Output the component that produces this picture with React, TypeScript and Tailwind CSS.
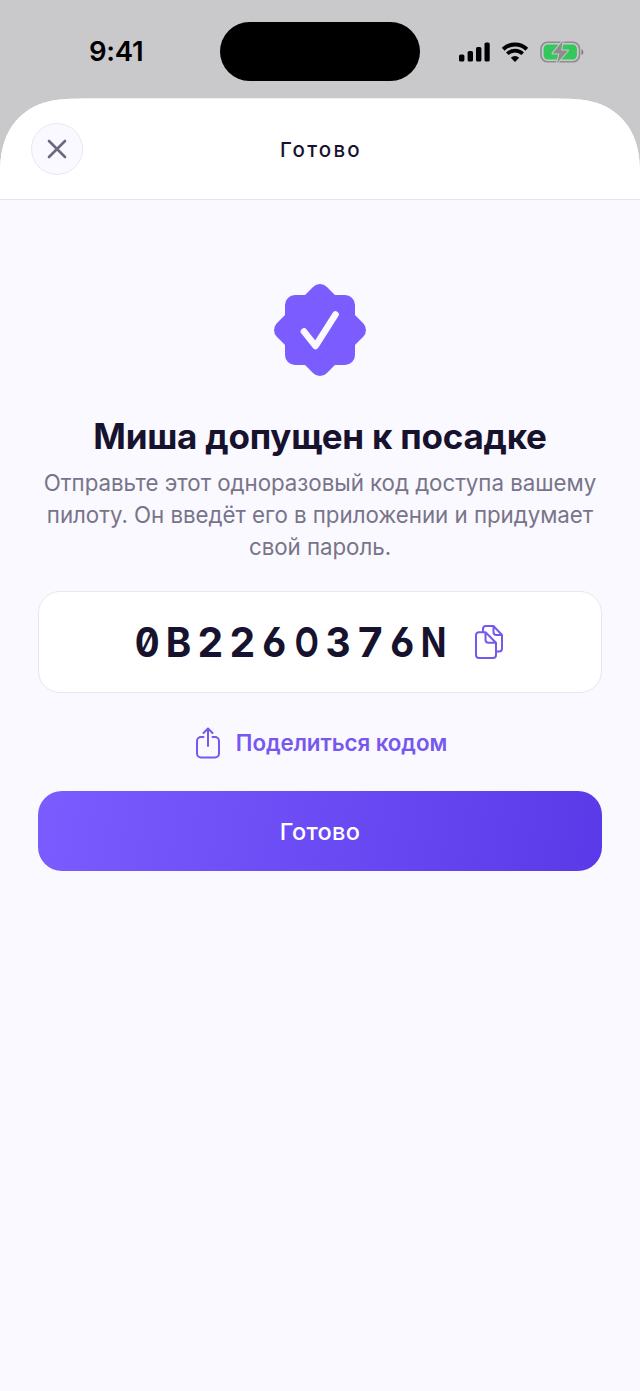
const code: [string, string][] = [
  ['0', 'scale-x-[0.94]'],
  ['B', 'scale-x-[0.94]'],
  ['2', 'scale-x-[0.99]'],
  ['2', 'scale-x-[0.99]'],
  ['6', 'scale-x-[0.96]'],
  ['O', 'scale-x-[0.76]'],
  ['3', 'scale-x-[0.95]'],
  ['7', 'scale-x-[1.04]'],
  ['6', 'scale-x-[0.96]'],
  ['N', 'scale-x-[0.82]'],
];

function StatusBar() {
  return (
    <div className="flex h-[98px] items-start pt-[22px]">
      <div className="flex h-[58px] w-[220px] items-center pl-[89px] pt-[2px] text-[27.500px] font-semibold tracking-[-0.300px] text-black">
        <span>9:41</span>
      </div>
      <div className="h-[58.500px] w-[200px] rounded-full bg-black" />
      <div className="flex h-[58px] items-center pl-[38px] pt-px">
        <svg width="32" height="22" viewBox="0 0 32 22">
          <rect x="1" y="13.5" width="5.4" height="7" rx="1.6" />
          <rect x="9.6" y="10" width="5.4" height="10.5" rx="1.6" />
          <rect x="18" y="6" width="5.4" height="14.5" rx="1.6" />
          <rect x="26.5" y="1.5" width="5.2" height="19" rx="1.6" />
        </svg>
        <svg className="ml-[11px]" width="28" height="22" viewBox="0 0 28 22">
          <path d="M2.2 8.2a17 17 0 0 1 23.6 0" fill="none" stroke="#000" strokeWidth="4" />
          <path d="M6.3 12.800a11 11 0 0 1 15.4 0" fill="none" stroke="#000" strokeWidth="3.6" />
          <path d="M9.8 16.8a6 6 0 0 1 8.4 0L14 21Z" />
        </svg>
        <svg className="ml-[11px]" width="45" height="24" viewBox="0 0 45 24">
          <rect x="1" y="2.2" width="38.5" height="19.6" rx="6.6" fill="none" stroke="#8d8d8f" strokeWidth="1.6" />
          <rect x="3.6" y="4.6" width="33.3" height="14.8" rx="4.2" fill="#34c759" />
          <path d="M41.5 9.2c2.4.8 2.4 5 0 5.800Z" fill="#77777a" />
          <path d="M22.8.8 12.600 13.400h6.800L17 23.200 28 10.400h-6.900Z" fill="#8d8d8f" stroke="#c9c9cb" strokeWidth="2" paintOrder="stroke" strokeLinejoin="round" />
        </svg>
      </div>
    </div>
  );
}

export default function App() {
  return (
    <div className="flex h-[1391px] w-[640px] flex-col bg-[#c9c9cb] font-['Inter',sans-serif]">
      <StatusBar />
      <main className="flex flex-1 flex-col bg-[#faf9ff] [clip-path:path('M0_1293V77C0_56_3_42_12_28C20_17_30_9_43_5C55_1_70_0.500_92_0.500H548C570_0.500_585_1_597_5C610_9_620_17_628_28C637_42_640_56_640_77V1293Z')]">
        <header className="grid h-[102px] grid-cols-[52px_1fr_52px] items-center border-b border-[#e6e4f0] bg-white px-[31px] pt-px">
          <button className="flex size-[52px] items-center justify-center rounded-full border-[1.5px] border-[#e8e6f2] bg-[#faf9ff]">
            <svg width="20" height="20" viewBox="0 0 20 20" fill="none" stroke="#6b6880" strokeWidth="2.6" strokeLinecap="round">
              <path d="m2 2 16 16M18 2 2 18" />
            </svg>
          </button>
          <h1 className="pt-[2px] pl-[2px] text-center text-[20.500px] font-medium tracking-[2.200px] text-[#17132e]">Готово</h1>
        </header>
        <section className="flex flex-col items-center px-[38px] pt-[84px]">
          <svg width="92" height="92" viewBox="0 0 92 92">
            <g fill="#7b5cff">
              <rect x="11" y="11" width="70" height="70" rx="10" />
              <rect x="10.700" y="10.700" width="70.600" height="70.600" rx="9.500" transform="rotate(45 46 46)" />
            </g>
            <path d="m30 48.500 11.500 14.500L61.500 31.500" transform="translate(0 -1)" fill="none" stroke="#faf9ff" strokeWidth="6.600" strokeLinecap="round" strokeLinejoin="round" />
          </svg>
          <h2 className="mt-[38px] whitespace-nowrap text-[35px] leading-[44px] font-bold tracking-[-0.220px] text-[#17132e]">Миша допущен к посадке</h2>
          <p className="mt-[9px] text-center text-[22.300px] leading-[32px] tracking-[-0.030px] whitespace-nowrap text-[#787489]">
            Отправьте этот одноразовый код доступа вашему
            <br />
            пилоту. Он введёт его в приложении и придумает
            <br />
            свой пароль.
          </p>
          <div className="mt-[28px] flex h-[102px] w-full items-center rounded-[22px] border-[1.5px] border-[#e8e6f2] bg-white pl-[92px]">
            <div className="flex text-[41px] leading-[50px] font-bold text-[#17132e] [font-feature-settings:'zero','cv03','tnum']">
              {code.map(([char, scale], index) => (
                <span key={index} className="flex w-[31.900px] justify-center">
                  <span className={scale}>{char}</span>
                </span>
              ))}
            </div>
            <svg className="ml-[25.500px]" width="30" height="36" viewBox="0 0 30 36" fill="none" stroke="#7758ef" strokeWidth="2" strokeLinejoin="round">
              <path d="M8 8V5a3 3 0 0 1 3-3h7.500l8.500 9v13.500a3 3 0 0 1-3 3H21M18.500 2v6a3 3 0 0 0 3 3h5.500" />
              <path d="M4 8.200h6.500L21 18.700V31a3 3 0 0 1-3 3H4a3 3 0 0 1-3-3V11.200a3 3 0 0 1 3-3ZM10.500 8.200v7.500a3 3 0 0 0 3 3H21" />
            </svg>
          </div>
          <button className="mt-[34px] flex h-[32px] items-center pl-[2px] text-[22.300px] font-semibold tracking-[-0.050px] text-[#7758ef]">
            <svg className="mr-[15px]" width="26" height="32" viewBox="0 0 26 32" fill="none" stroke="currentColor" strokeWidth="2" strokeLinecap="round" strokeLinejoin="round">
              <path d="M8.500 10H6a4 4 0 0 0-4 4v12.500a4 4 0 0 0 4 4h14a4 4 0 0 0 4-4V14a4 4 0 0 0-4-4h-2.500M13 19V2M8.500 6 13 1.500 17.500 6" />
            </svg>
            Поделиться кодом
          </button>
          <button className="mt-[32px] h-[80px] w-full rounded-[24px] bg-[linear-gradient(100deg,#7b5cff,#5a3ae8)] pt-px text-[23.500px] font-medium tracking-[0.300px] text-white">Готово</button>
        </section>
      </main>
    </div>
  );
}
